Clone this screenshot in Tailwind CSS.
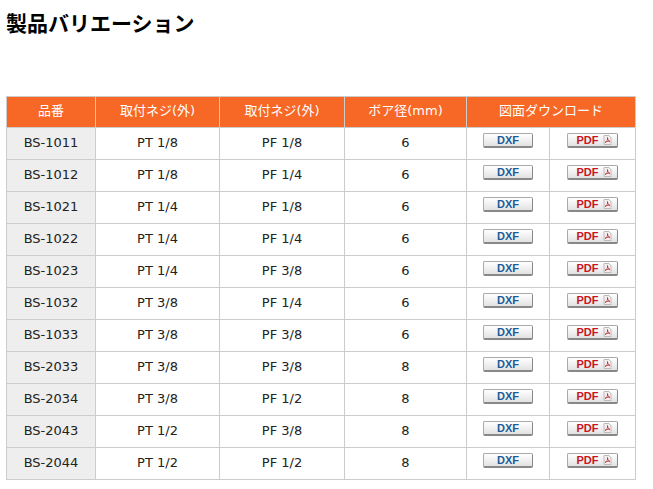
<!DOCTYPE html>
<html lang="ja">
<head>
    <meta charset="UTF-8">
    <title>製品バリエーション</title>
    <script src="https://cdn.jsdelivr.net/npm/@tailwindcss/browser@4"></script>
</head>
<body class="bg-white text-[#222] font-['DejaVu_Sans','Noto_Sans_CJK_JP',sans-serif]">
    <div class="w-[653px] h-[489px] overflow-hidden pl-[6px] pt-[8px]">
        <h1 class="h-[88px] text-[21px] leading-[28px] font-bold text-black font-['Noto_Sans_CJK_JP',sans-serif]">製品バリエーション</h1>
        <table class="w-[630px] table-fixed border-collapse text-[13px]">
            <colgroup>
                <col class="w-[89px]"><col class="w-[124px]"><col class="w-[125px]"><col class="w-[122px]"><col class="w-[83px]"><col class="w-[86px]">
            </colgroup>
            <thead>
                <tr class="h-[31px] bg-[#f76725] text-white">
                    <th class="border border-[#ccc] font-normal pb-[3px]">品番</th>
                    <th class="border border-[#ccc] font-normal pb-[3px]">取付ネジ(外)</th>
                    <th class="border border-[#ccc] font-normal pb-[3px]">取付ネジ(外)</th>
                    <th class="border border-[#ccc] font-normal pb-[3px]">ボア径(mm)</th>
                    <th colspan="2" class="border border-[#ccc] font-normal pb-[3px]">図面ダウンロード</th>
                </tr>
            </thead>
            <tbody id="rows"></tbody>
        </table>
    </div>

    <script>
        const data = [
            ['BS-1011', 'PT 1/8', 'PF 1/8', 6],
            ['BS-1012', 'PT 1/8', 'PF 1/4', 6],
            ['BS-1021', 'PT 1/4', 'PF 1/8', 6],
            ['BS-1022', 'PT 1/4', 'PF 1/4', 6],
            ['BS-1023', 'PT 1/4', 'PF 3/8', 6],
            ['BS-1032', 'PT 3/8', 'PF 1/4', 6],
            ['BS-1033', 'PT 3/8', 'PF 3/8', 6],
            ['BS-2033', 'PT 3/8', 'PF 3/8', 8],
            ['BS-2034', 'PT 3/8', 'PF 1/2', 8],
            ['BS-2043', 'PT 1/2', 'PF 3/8', 8],
            ['BS-2044', 'PT 1/2', 'PF 1/2', 8],
        ];

        const cell = 'border border-[#ccc] pb-[2px]';
        const btnCell = 'border border-[#ccc] align-top pt-[5px]';
        const dxfBtn = 'flex items-center justify-center mx-auto w-[50px] h-[15px] rounded-[2px] border border-[#aaa] border-r-[#888] border-b-2 border-b-[#888] bg-linear-to-b from-white to-[#e2e2e2] text-[11px] font-bold font-[Liberation_Sans] leading-none text-[#1c5c9c]';
        const pdfBtn = 'flex items-center justify-center mx-auto w-[51px] h-[15px] pl-[3px] rounded-[2px] border border-[#aaa] border-r-[#888] border-b-2 border-b-[#888] bg-linear-to-b from-white to-[#e2e2e2] text-[11px] font-bold font-[Liberation_Sans] leading-none text-[#c8161d]';
        const pdfIcon = `<svg class="ml-[4px]" width="9" height="10" viewBox="0 0 9 10"><path d="M1 .5h5l2 2v7H1z" fill="#f4f0f0" stroke="#c4b8b8"/><path d="M2 7.500c2-1 3-3 2.500-5 0 2 1 3.500 2.500 4-2-.3-3.500 0-5 1z" fill="none" stroke="#c8232c" stroke-width=".8"/></svg>`;

        document.getElementById('rows').innerHTML = data.map(r => `
            <tr class="h-[32px] text-center">
                <td class="${cell} bg-[#eee]">${r[0]}</td>
                <td class="${cell}">${r[1]}</td>
                <td class="${cell}">${r[2]}</td>
                <td class="${cell}">${r[3]}</td>
                <td class="${btnCell}"><a class="${dxfBtn}">DXF</a></td>
                <td class="${btnCell}"><a class="${pdfBtn}">PDF${pdfIcon}</a></td>
            </tr>`).join('');
    </script>
</body>
</html>
